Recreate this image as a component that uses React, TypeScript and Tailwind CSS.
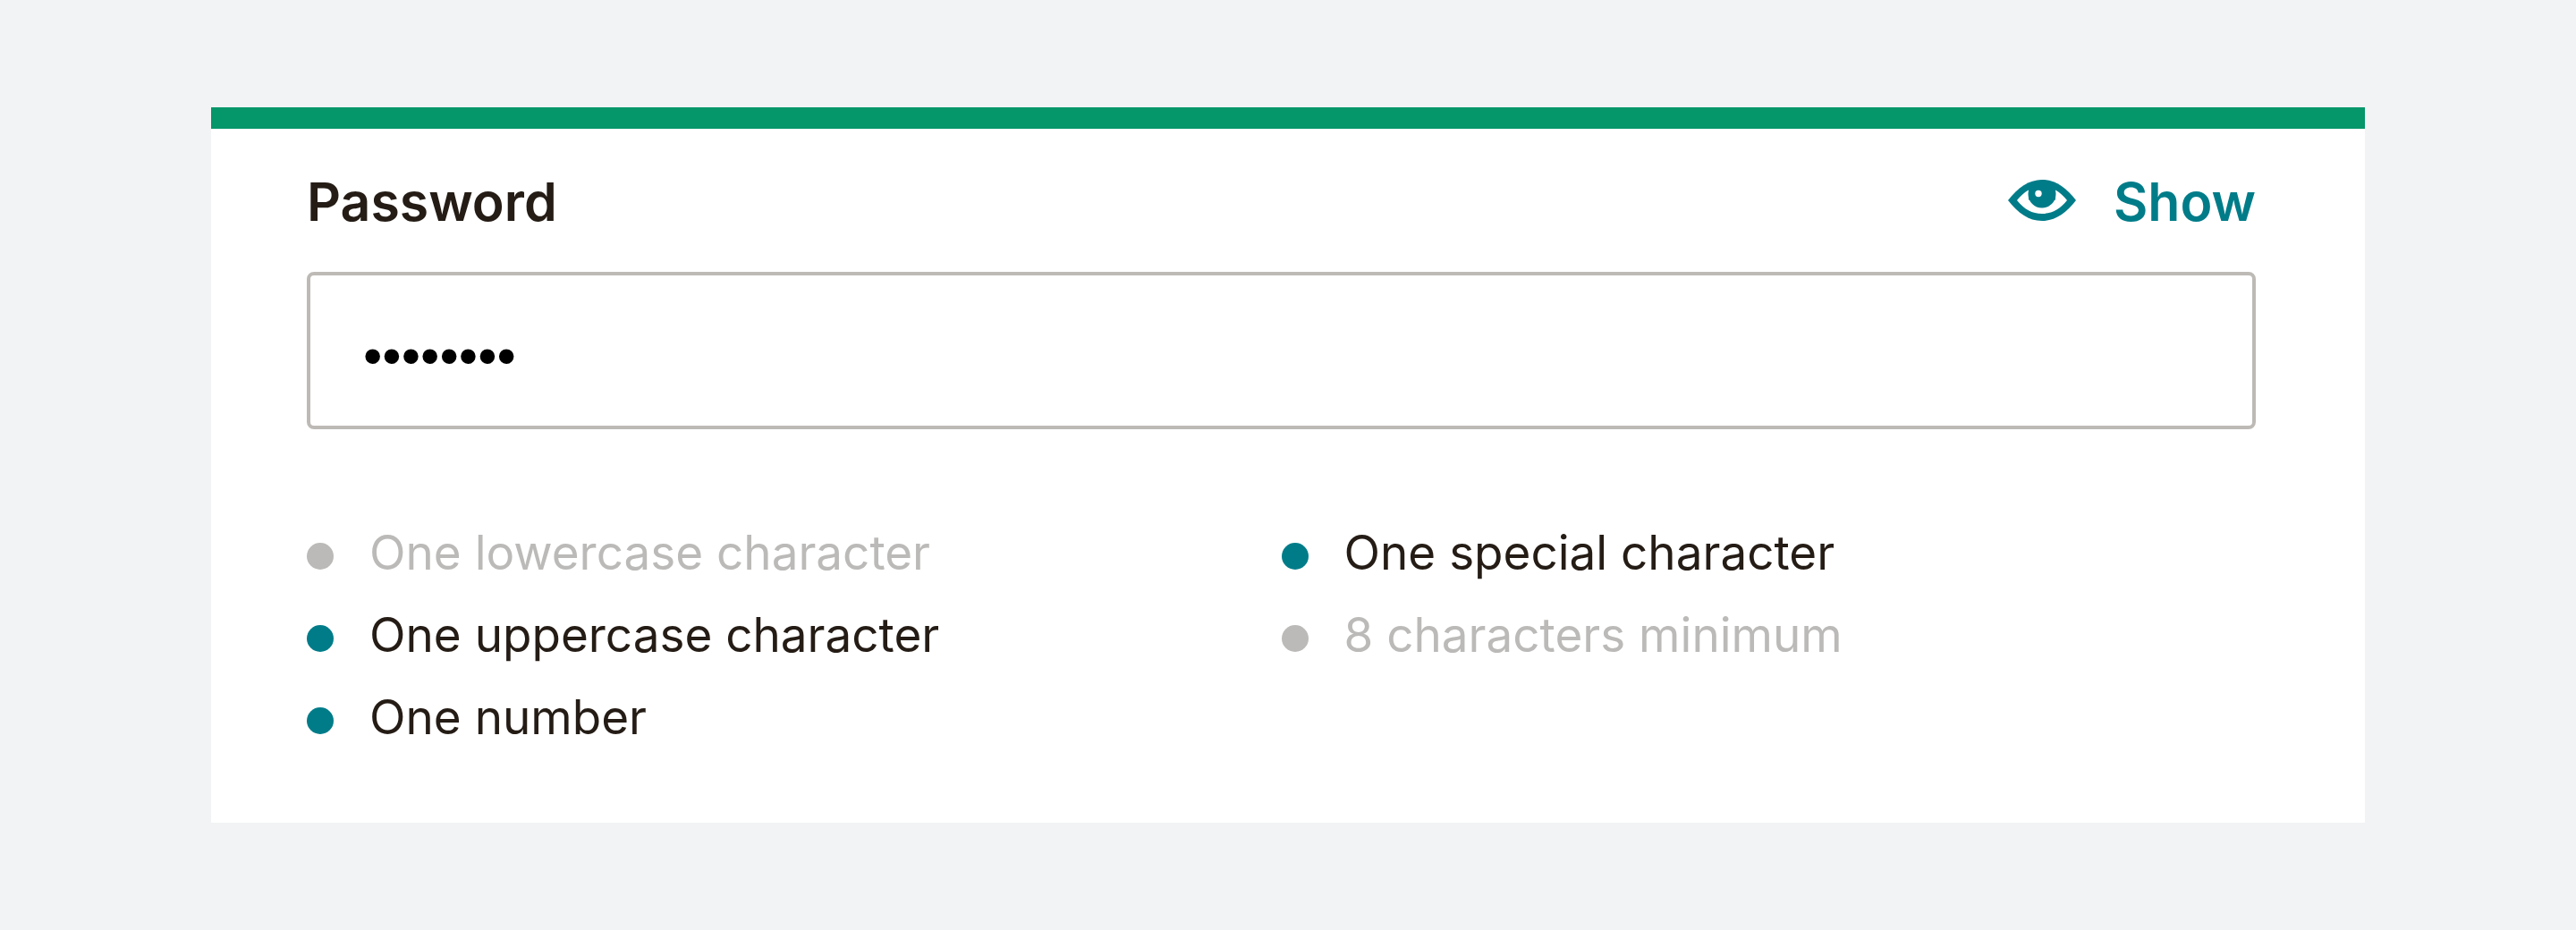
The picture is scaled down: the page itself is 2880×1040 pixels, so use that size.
import { useState } from "react";
import { clsx } from "clsx";

const RULES = [
  { label: "One lowercase character", met: false },
  { label: "One uppercase character", met: true },
  { label: "One number", met: true },
  { label: "One special character", met: true },
  { label: "8 characters minimum", met: false },
];

function EyeIcon() {
  return (
    <svg viewBox="0 0 76 46" className="h-[46px] w-[76px]" fill="currentColor" aria-hidden="true">
      <path d="M0 23C11 9 23 0 38 0s27 9 38 23C65 37 53 46 38 46S11 37 0 23Z" />
      <path fill="#fff" d="M10 23c4-5 8-8.500 13-11.500v11h30v-11c5 3 9 6.500 13 11.500-8 10-17 15-28 15s-20-5-28-15Z" />
      <circle cx="38" cy="16" r="15.500" />
      <circle cx="34" cy="15.500" r="3.700" fill="#fff" />
    </svg>
  );
}

export default function App() {
  const [visible, setVisible] = useState(false);
  const [password, setPassword] = useState("PASS#12A");

  return (
    <main className="min-h-screen bg-[#f2f3f5] px-[236px] py-[120px] font-['Inter',sans-serif] text-[#241c15]">
      <form className="border-t-24 border-[#059669] bg-white pr-[122px] pb-[68px] pl-[107px]">
        <div className="flex h-[160px] items-center justify-between">
          <label htmlFor="password" className="pt-1 text-[59px] font-semibold">
            Password
          </label>
          <button
            type="button"
            onClick={() => setVisible(!visible)}
            className="flex items-center gap-[42px] text-[59px] font-semibold text-[#007c89]"
          >
            <EyeIcon />
            <span className="pt-1">{visible ? "Hide" : "Show"}</span>
          </button>
        </div>

        <input
          id="password"
          type={visible ? "text" : "password"}
          value={password}
          onChange={(e) => setPassword(e.target.value)}
          className="h-44 w-full rounded-lg border-4 border-[#bdbab6] px-[59px] pt-3 font-['Liberation_Sans',sans-serif] text-[61px] text-black outline-none"
        />

        <ul className="mt-24 grid grid-flow-col grid-cols-2 grid-rows-3">
          {RULES.map(({ label, met }) => (
            <li
              key={label}
              className={clsx("flex h-[92px] items-center gap-10 text-[53px]", !met && "text-[#bbbab8]")}
            >
              <span className={clsx("size-[30px] rounded-full", met ? "bg-[#007c89]" : "bg-[#bbbab8]")} />
              <span className="pb-1.5">{label}</span>
            </li>
          ))}
        </ul>
      </form>
    </main>
  );
}
